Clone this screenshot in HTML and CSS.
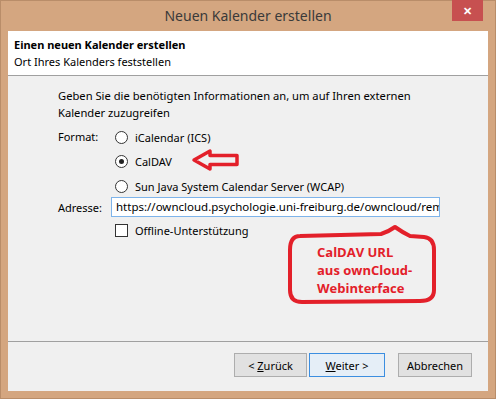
FILE: index.html
```html
<!DOCTYPE html>
<html lang="de">
<head>
    <meta charset="UTF-8">
    <title>Neuen Kalender erstellen</title>
    <link rel="stylesheet" href="styles.css">
</head>
<body>
    <div class="window">
        <div class="titlebar">
            <span class="title">Neuen Kalender erstellen</span>
            <span class="close">&#x2715;</span>
        </div>
        <div class="client">
            <div class="header">
                <div class="header-title">Einen neuen Kalender erstellen</div>
                <div class="header-sub">Ort Ihres Kalenders feststellen</div>
            </div>
            <div class="content">
                <p class="intro">Geben Sie die benötigten Informationen an, um auf Ihren externen Kalender zuzugreifen</p>
                <div class="form">
                    <div class="label label-top">Format:</div>
                    <div class="options">
                        <div class="option"><span class="radio"></span>iCalendar (ICS)</div>
                        <div class="option"><span class="radio checked"></span>CalDAV</div>
                        <div class="option"><span class="radio"></span>Sun Java System Calendar Server (WCAP)</div>
                    </div>
                    <div class="label label-right">Adresse:</div>
                    <div class="field">https://owncloud.psychologie.uni-freiburg.de/owncloud/remote.php/caldav/</div>
                    <div></div>
                    <div class="option check-row"><span class="checkbox"></span>Offline-Unterstützung</div>
                </div>
            </div>
            <div class="footer">
                <button class="btn btn-back">&lt; <u>Z</u>urück</button>
                <button class="btn btn-next"><u>W</u>eiter &gt;</button>
                <button class="btn btn-cancel">Abbrechen</button>
            </div>
        </div>
    </div>

    <svg class="marks" width="496" height="399" viewBox="0 0 496 399">
        <path d="M194 160 L210 151 L210 155.5 L237 155.5 L237 164.5 L210 164.5 L210 169 Z" fill="none" stroke="#e3202a" stroke-width="3.5" stroke-linejoin="round"/>
        <path d="M300 236 L381 234 Q388 232 395 227 Q402 232 410 236 L424 237 Q434 238 434 250 L434 290 Q434 301 420 301 L302 302 Q290 302 290 290 L290 250 Q290 236 300 236 Z" fill="none" stroke="#e3202a" stroke-width="4" stroke-linejoin="round"/>
    </svg>
    <div class="note">CalDAV URL<br>aus ownCloud-<br>Webinterface</div>
</body>
</html>
```

FILE: styles.css
```css
body { margin: 0; font-family: "Noto Sans", "Open Sans", sans-serif; font-size: 11px; color: #000; }
.window { width: 496px; height: 399px; box-sizing: border-box; background: #d4a680; border: 1px solid #b98d69; padding: 0 7px 7px; display: flex; flex-direction: column; }
.titlebar { height: 30px; position: relative; display: flex; align-items: center; justify-content: center; }
.title { font-size: 14px; color: #3a3a3a; margin-top: -2px; }
.close { position: absolute; right: 5px; top: -1px; width: 31px; height: 21px; background: #c75050; color: #fff; font-size: 11px; font-weight: bold; display: flex; align-items: center; justify-content: center; }
.client { flex: 1; background: #f0f0f0; display: flex; flex-direction: column; }
.header { background: #fff; height: 45px; border-bottom: 1px solid #a0a0a0; padding: 5px 0 0 6px; box-sizing: border-box; }
.header-title { font-weight: bold; line-height: 17px; }
.header-sub { line-height: 18px; }
.content { flex: 1; padding: 11px 0 0 50px; }
.intro { margin: 0; width: 400px; line-height: 17px; font-size: 11.2px; }
.form { display: grid; grid-template-columns: 53px 329px; row-gap: 0; margin-top: 4px; }
.label { line-height: 18px; }
.label-top { line-height: 24.5px; }
.label-right { text-align: right; padding-right: 10px; align-self: center; }
.options { display: flex; flex-direction: column; }
.option { display: flex; align-items: center; height: 24.5px; padding-left: 4px; }
.radio { width: 11px; height: 11px; border: 1px solid #333; border-radius: 50%; background: #fff; margin-right: 7px; display: flex; align-items: center; justify-content: center; }
.radio.checked::after { content: ""; width: 5px; height: 5px; border-radius: 50%; background: #222; }
.field { height: 20px; box-sizing: border-box; border: 1px solid #7eb4ea; background: #fff; padding: 0 4px; line-height: 18px; font-size: 11.5px; white-space: nowrap; overflow: hidden; margin-top: -2px; }
.check-row { margin-top: 2px; }
.checkbox { width: 11px; height: 11px; border: 1px solid #333; background: #fff; margin-right: 7px; }
.footer { height: 50px; border-top: 1px solid #a0a0a0; display: flex; justify-content: flex-end; align-items: flex-start; padding: 11px 16px 0 0; box-sizing: border-box; }
.btn { font-family: inherit; font-size: 11px; height: 24px; background: #e1e1e1; border: 1px solid #adadad; padding: 0; margin: 0; color: #000; }
.btn-back { width: 73px; }
.btn-next { width: 76px; margin-left: 2px; border-color: #3c8ee0; background: #e5eef7; }
.btn-cancel { width: 74px; margin-left: 13px; }
.marks { position: absolute; left: 0; top: 0; pointer-events: none; }
.note { position: absolute; left: 317px; top: 243px; color: #e3202a; font-family: "Open Sans", sans-serif; font-weight: bold; font-size: 13px; line-height: 18px; }
```
